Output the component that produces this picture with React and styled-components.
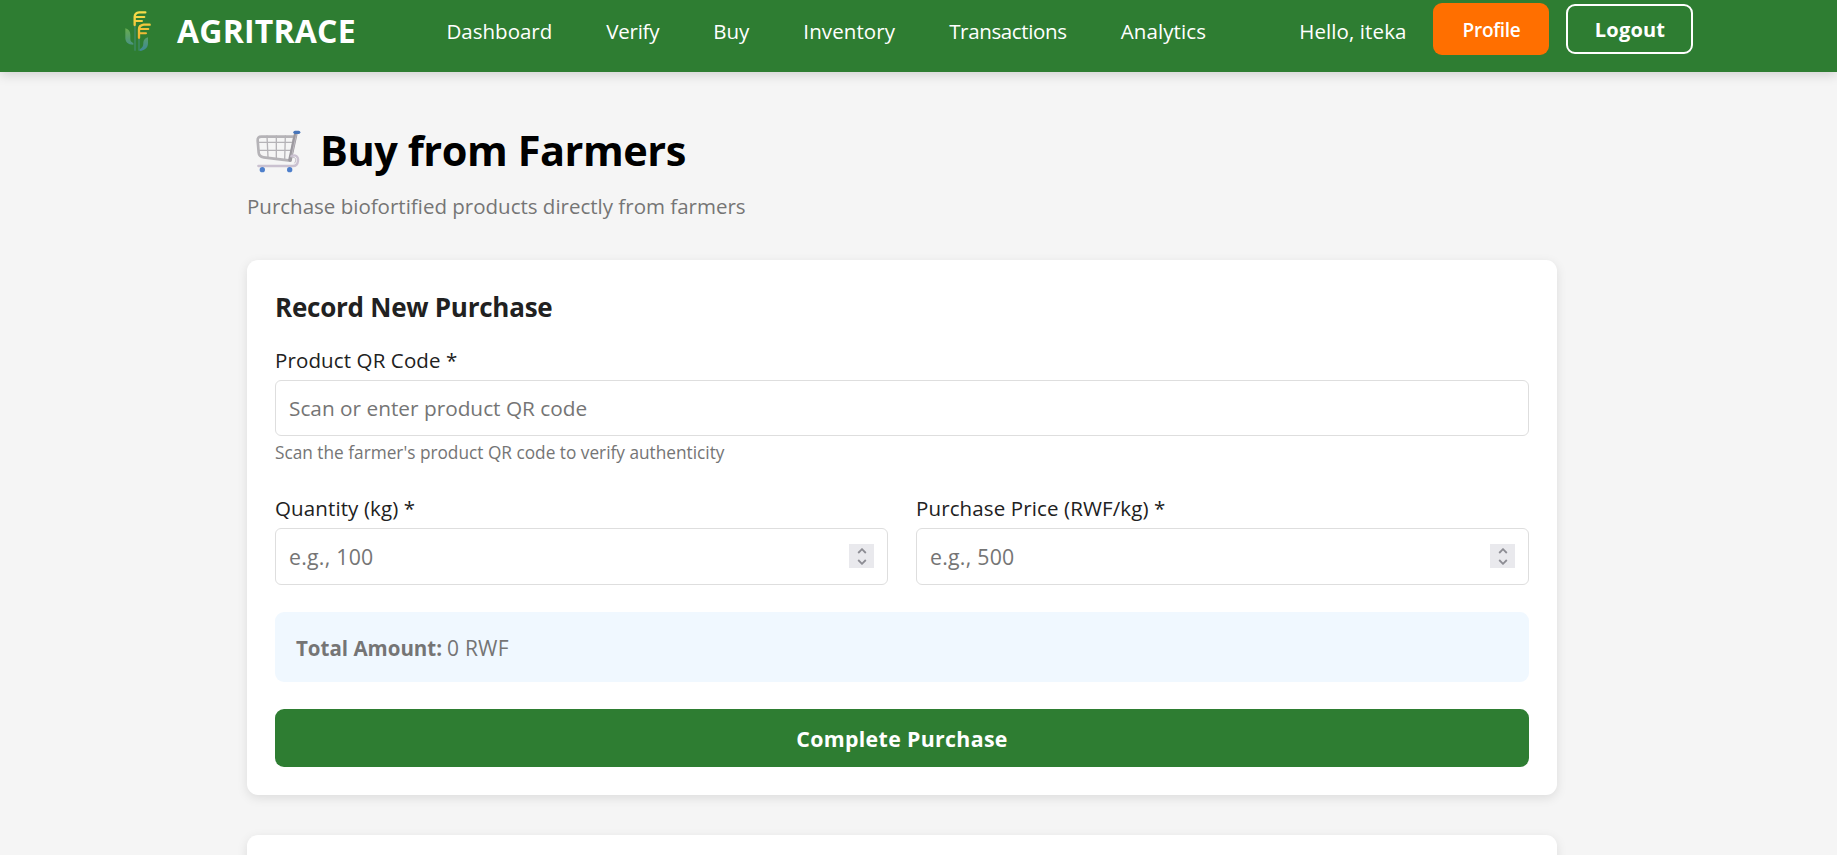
import React from "react";
import styled, { createGlobalStyle } from "styled-components";

const GlobalStyle = createGlobalStyle`
  * { box-sizing: border-box; }
  html, body { margin: 0; height: 100%; overflow: hidden; }
  body {
    background: #f5f5f5;
    color: #212121;
    font-family: "Open Sans", "Noto Sans", sans-serif;
    font-size: 20.5px;
    line-height: 28px;
  }
  h1, h2, p { margin: 0; }
`;

const Header = styled.header`
  display: flex;
  align-items: center;
  height: 72px;
  padding: 0 144px 14px 125px;
  background: #2e7d32;
  color: #fff;
  box-shadow: 0 3px 11px rgba(0, 0, 0, 0.15);
  white-space: nowrap;
`;

const Brand = styled.div`
  display: flex;
  align-items: center;
  gap: 26px;
  width: 321.5px;
  margin-top: 3px;
  font-size: 32px;
  font-weight: 700;
  letter-spacing: 0.2px;
`;

const Nav = styled.nav`
  display: flex;
  gap: 54px;
  margin-top: 3px;
`;

const NavLink = styled.a`
  color: #fff;
  letter-spacing: ${(p) => p.$track}px;
`;

const Account = styled.div`
  display: flex;
  align-items: center;
  margin-left: auto;
`;

const Greeting = styled.span`
  margin: 3px 26.5px 0 0;
  letter-spacing: 0.1px;
`;

const HeaderButton = styled.button`
  height: ${(p) => (p.$outlined ? 50 : 52)}px;
  width: ${(p) => (p.$outlined ? 127 : 116)}px;
  margin-left: ${(p) => (p.$outlined ? 17 : 0)}px;
  padding: ${(p) => (p.$outlined ? 1 : 2)}px 0 0 1px;
  border: ${(p) => (p.$outlined ? "2px solid #fff" : "0")};
  border-radius: 9px;
  background: ${(p) => (p.$outlined ? "transparent" : "#ff6f00")};
  color: #fff;
  font-family: inherit;
  font-size: ${(p) => (p.$outlined ? 20 : 19)}px;
  font-weight: ${(p) => (p.$outlined ? 700 : 600)};
  letter-spacing: ${(p) => (p.$outlined ? 0.2 : -0.3)}px;
`;

const Page = styled.main`
  width: 1310px;
  margin: 50px 0 0 247px;
`;

const TitleRow = styled.div`
  display: flex;
  align-items: center;
  gap: 18px;
  padding-left: 9px;

  svg { margin-top: 3px; }
`;

const Title = styled.h1`
  color: #000;
  font-size: 41.5px;
  line-height: 56px;
  font-weight: 700;
  letter-spacing: -0.45px;
`;

const Subtitle = styled.p`
  margin: 14px 0 40px;
  color: #757575;
`;

const Card = styled.section`
  margin-bottom: 40px;
  padding: 28px;
  min-height: 120px;
  border-radius: 11px;
  background: #fff;
  box-shadow: 0 3px 11px rgba(0, 0, 0, 0.1);
`;

const CardTitle = styled.h2`
  margin-bottom: 20px;
  font-size: 26px;
  line-height: 38px;
  font-weight: 700;
  letter-spacing: -0.25px;
`;

const Label = styled.label`
  display: block;
  margin-bottom: 6px;
  letter-spacing: 0.12px;
`;

const InputBox = styled.div`
  display: flex;
  align-items: center;
  height: ${(p) => p.$height}px;
  padding: 0 13px;
  border: 1px solid #dedede;
  border-radius: 6px;
`;

const Input = styled.input`
  flex: 1;
  min-width: 0;
  height: 40px;
  padding: 0;
  border: 0;
  outline: 0;
  background: transparent;
  font: inherit;
  font-size: ${(p) => p.$numeric ? 21.3 : 20.8}px;
  letter-spacing: ${(p) => p.$numeric ? 0.25 : 0}px;
  &::placeholder { color: #757575; opacity: 1; }
`;

const Stepper = styled.span`
  display: flex;
  flex-direction: column;
  align-items: center;
  justify-content: center;
  gap: 5px;
  width: 25px;
  height: 24px;
  margin-bottom: 1px;
  background: #e9e9ed;
`;

const Hint = styled.p`
  margin: 5px 0 29px;
  color: #757575;
  font-size: 17.25px;
  line-height: 24px;
`;

const FieldRow = styled.div`
  display: grid;
  grid-template-columns: 1fr 1fr;
  gap: 28px;
`;

const Total = styled.p`
  display: flex;
  align-items: center;
  gap: 5px;
  height: 70px;
  margin: 27px 0;
  padding: 2px 20px 0 21px;
  border-radius: 9px;
  background: #f0f8ff;
  color: #757575;
`;

const Amount = styled.span`
  font-size: 21px;
  letter-spacing: 0.2px;
`;

const SubmitButton = styled.button`
  display: block;
  width: 100%;
  height: 58px;
  padding: 1px 0 0;
  border: 0;
  border-radius: 9px;
  background: #2e7d32;
  color: #fff;
  font: inherit;
  font-weight: 700;
  font-size: 21.3px;
  letter-spacing: 0.35px;
`;

const Wheat = () => (
  <svg width="26" height="42" viewBox="75 31 78 126" fill="none" strokeLinecap="round">
    <defs>
      <linearGradient id="leaf" x1="0" y1="85" x2="0" y2="155" gradientUnits="userSpaceOnUse">
        <stop offset="0" stopColor="#69ad4e" />
        <stop offset="1" stopColor="#3d8797" />
      </linearGradient>
      <linearGradient id="ear" x1="0" y1="33" x2="0" y2="118" gradientUnits="userSpaceOnUse">
        <stop offset="0" stopColor="#f7e04b" />
        <stop offset="1" stopColor="#efb130" />
      </linearGradient>
    </defs>
    <path d="M76 86C87 89 91 97 91 106V118C91 126 96 128 100 130V135C83 135 76 126 76 115Z" fill="url(#leaf)" />
    <path d="M144 113C133 116 130 124 130 131C130 141 126 145 119 149V154C137 152 144 143 144 130Z" fill="url(#leaf)" />
    <path d="M105 78V152M117 118V152" stroke="#44907c" strokeWidth="3" />
    <g stroke="url(#ear)" strokeWidth="6">
      <path d="M104 76V52Q104 39 118 38H136" strokeWidth="7" />
      <path d="M107 52H133M107 64H126" />
      <path d="M117 114V89Q117 77 131 75H149" strokeWidth="7" />
      <path d="M120 88H145M120 101H138" />
    </g>
  </svg>
);

const Cart = () => (
  <svg width="46" height="44" viewBox="30 30 138 132" fill="none" strokeLinecap="round" strokeLinejoin="round">
    <path d="M39 67H141M41 91H137M63 48L66 112M91 48V117M118 48L116 120" stroke="#b5b3b7" strokeWidth="4" />
    <path d="M145 50H46Q34 50 35 62L38 98Q39 110 53 112L133 122Z" stroke="#b5b3b7" strokeWidth="8" />
    <path d="M149 43L132 120" stroke="#9c999f" strokeWidth="11" />
    <path d="M151 44L137 108" stroke="#bdb9c0" strokeWidth="3" />
    <path d="M136 109C148 101 158 111 156 123Q154 138 141 138H37" stroke="#cac1d0" strokeWidth="7" />
    <path d="M142 112C150 112 152 121 146 129" stroke="#a89fb0" strokeWidth="2" />
    <path d="M147 37H158" stroke="#4775b9" strokeWidth="10" />
    <circle cx="49" cy="149" r="8" fill="#4e7fcb" />
    <circle cx="131" cy="149" r="8" fill="#4e7fcb" />
  </svg>
);

const Arrow = ({ d }) => (
  <svg width="10" height="6" viewBox="0 0 10 6" fill="none" stroke="#8d8d94" strokeWidth="1.8">
    <path d={d} />
  </svg>
);

const links = [
  ["Dashboard", 0],
  ["Verify", -0.25],
  ["Buy", 0],
  ["Inventory", 0.1],
  ["Transactions", -0.35],
  ["Analytics", 0.1],
];

const NumberField = ({ label, placeholder }) => (
  <div>
    <Label>{label}</Label>
    <InputBox $height={57}>
      <Input $numeric placeholder={placeholder} />
      <Stepper>
        <Arrow d="M1.2 5L5 1.2L8.8 5" />
        <Arrow d="M1.2 1L5 4.8L8.8 1" />
      </Stepper>
    </InputBox>
  </div>
);

export default function App() {
  return (
    <>
      <GlobalStyle />
      <Header>
        <Brand>
          <Wheat />
          AGRITRACE
        </Brand>
        <Nav>
          {links.map(([name, track]) => (
            <NavLink key={name} $track={track}>{name}</NavLink>
          ))}
        </Nav>
        <Account>
          <Greeting>Hello, iteka</Greeting>
          <HeaderButton>Profile</HeaderButton>
          <HeaderButton $outlined>Logout</HeaderButton>
        </Account>
      </Header>
      <Page>
        <TitleRow>
          <Cart />
          <Title>Buy from Farmers</Title>
        </TitleRow>
        <Subtitle>Purchase biofortified products directly from farmers</Subtitle>
        <Card>
          <CardTitle>Record New Purchase</CardTitle>
          <Label>Product QR Code *</Label>
          <InputBox $height={56}>
            <Input placeholder="Scan or enter product QR code" />
          </InputBox>
          <Hint>Scan the farmer's product QR code to verify authenticity</Hint>
          <FieldRow>
            <NumberField label="Quantity (kg) *" placeholder="e.g., 100" />
            <NumberField label="Purchase Price (RWF/kg) *" placeholder="e.g., 500" />
          </FieldRow>
          <Total>
            <strong>Total Amount:</strong>
            <Amount>0 RWF</Amount>
          </Total>
          <SubmitButton>Complete Purchase</SubmitButton>
        </Card>
        <Card />
      </Page>
    </>
  );
}
